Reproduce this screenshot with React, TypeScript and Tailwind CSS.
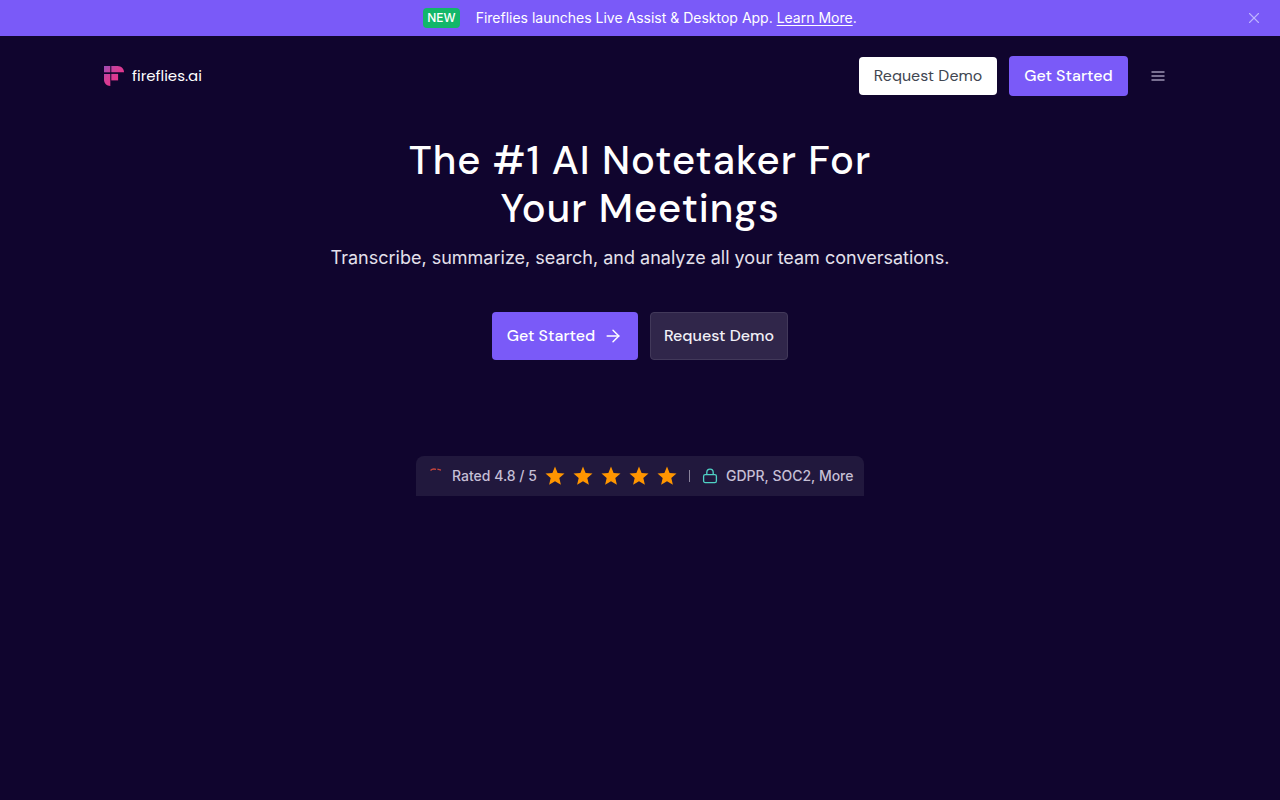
import { useState } from 'react';
import { ArrowRight, X } from 'lucide-react';

function Logo() {
  return (
    <svg className="w-5 h-5" viewBox="0 0 20 20" aria-hidden="true">
      <defs>
        <linearGradient id="logo-fill" gradientUnits="userSpaceOnUse" x1="0" y1="0" x2="14" y2="14">
          <stop offset="0" stopColor="#9a4cb4" />
          <stop offset="0.5" stopColor="#cf3f97" />
          <stop offset="1" stopColor="#e8348c" />
        </linearGradient>
      </defs>
      <g fill="url(#logo-fill)">
        <path d="M0 0h6.3v6.3H0z" />
        <path d="M7.3 0h6.3C17.2 0 20 2.8 20 6.3H7.3z" />
        <path d="M7.3 7.9h6.8v6.5H7.3z" />
        <path d="M0 7.9h6.3V20C2.8 20 0 17.2 0 13.8z" />
      </g>
    </svg>
  );
}

function Star() {
  return (
    <svg className="w-5 h-5" viewBox="0 0 20 20" fill="#ff9500" aria-hidden="true">
      <path d="M10 0.6l2.6 6.3 6.9.6-5.2 4.5 1.6 6.8L10 15.2l-5.9 3.6 1.6-6.8L.5 7.5l6.9-.6z" />
    </svg>
  );
}

function Lock() {
  return (
    <svg className="w-4 h-4" viewBox="0 0 16 16" fill="none" stroke="#4fd1c5" strokeWidth="1.3" aria-hidden="true">
      <rect x="1.6" y="6.6" width="12.8" height="8" rx="1.6" />
      <path d="M4.8 6.6V4.4a3.2 3.2 0 0 1 6.4 0v2.2" />
    </svg>
  );
}

function Announcement({ onClose }: { onClose: () => void }) {
  return (
    <div className="flex items-center h-9 px-4 bg-[#7a5af8] text-white">
      <div className="w-5" />
      <div className="flex-1 flex items-center justify-center gap-4">
        <span className="h-5 px-1 rounded bg-[#12b76a] text-xs leading-5 font-medium">NEW</span>
        <p className="text-sm">
          Fireflies launches Live Assist &amp; Desktop App.{' '}
          <a href="#live-assist" className="underline underline-offset-2">Learn More</a>.
        </p>
      </div>
      <button onClick={onClose} aria-label="Close" className="w-5 h-5 flex items-center justify-center text-[#bdb4fe]">
        <X size={18} strokeWidth={1.5} />
      </button>
    </div>
  );
}

function Header() {
  return (
    <header className="flex items-center justify-between h-20 px-[104px]">
      <a href="#home" className="flex items-center gap-2 font-['Poppins','Inter',sans-serif] text-[15px] text-white">
        <Logo />
        fireflies.ai
      </a>
      <div className="flex items-center gap-3 font-['DM_Sans','Inter',sans-serif] text-base">
        <button className="w-[138px] h-[38px] rounded bg-white text-[#414651] whitespace-nowrap">Request Demo</button>
        <button className="w-[119px] h-10 rounded bg-[#7a5af8] text-white font-medium whitespace-nowrap">Get Started</button>
        <button aria-label="Menu" className="w-9 h-9 flex items-center justify-center text-[#9c94b4]">
          <svg width="14" height="12" viewBox="0 0 14 12" stroke="currentColor" strokeWidth="1.6">
            <path d="M.5 2h13M.5 6h13M.5 10h13" />
          </svg>
        </button>
      </div>
    </header>
  );
}

function Rating() {
  return (
    <div className="flex items-center w-[448px] h-10 pl-3 rounded-t-lg bg-[#21183d] text-sm font-medium text-[#c5bfd5]">
      <svg className="w-4 h-4" viewBox="0 0 16 16" fill="none" stroke="#c8453c" strokeWidth="1.4" aria-hidden="true">
        <path d="M2.5 2.4C4 1 6 .8 8 1.4M9.4 1.2l3.6 1" />
      </svg>
      <span className="ml-2 whitespace-nowrap">Rated 4.8 / 5</span>
      <div className="flex gap-2 ml-2">
        {[1, 2, 3, 4, 5].map((n) => (
          <Star key={n} />
        ))}
      </div>
      <div className="w-px h-3 mx-3 bg-[#8a839c]" />
      <Lock />
      <span className="ml-2 whitespace-nowrap">GDPR, SOC2, More</span>
    </div>
  );
}

export default function App() {
  const [showBanner, setShowBanner] = useState(true);

  return (
    <div className="min-h-screen bg-[#10052e] font-['Inter',sans-serif]">
      {showBanner && <Announcement onClose={() => setShowBanner(false)} />}
      <Header />

      {/* Hero */}
      <main className="flex flex-col items-center pt-5 text-center">
        <h1 className="font-['DM_Sans','Inter',sans-serif] text-[40px] leading-[48px] font-medium tracking-wide text-white">
          The #1 AI Notetaker For
          <br />
          Your Meetings
        </h1>
        <p className="mt-3 text-lg text-[#e4e1ec]">
          Transcribe, summarize, search, and analyze all your team conversations.
        </p>

        <div className="flex gap-3 mt-10 font-['DM_Sans','Inter',sans-serif] text-base font-medium">
          <button className="flex items-center justify-center gap-2 w-[146px] h-12 rounded bg-[#7a5af8] text-white whitespace-nowrap">
            Get Started
            <ArrowRight size={20} strokeWidth={1.75} />
          </button>
          <button className="w-[138px] h-12 rounded border border-[#42395a] bg-[#30264a] text-[#f2f0f7] whitespace-nowrap">
            Request Demo
          </button>
        </div>

        <div className="mt-24">
          <Rating />
        </div>
      </main>
    </div>
  );
}
